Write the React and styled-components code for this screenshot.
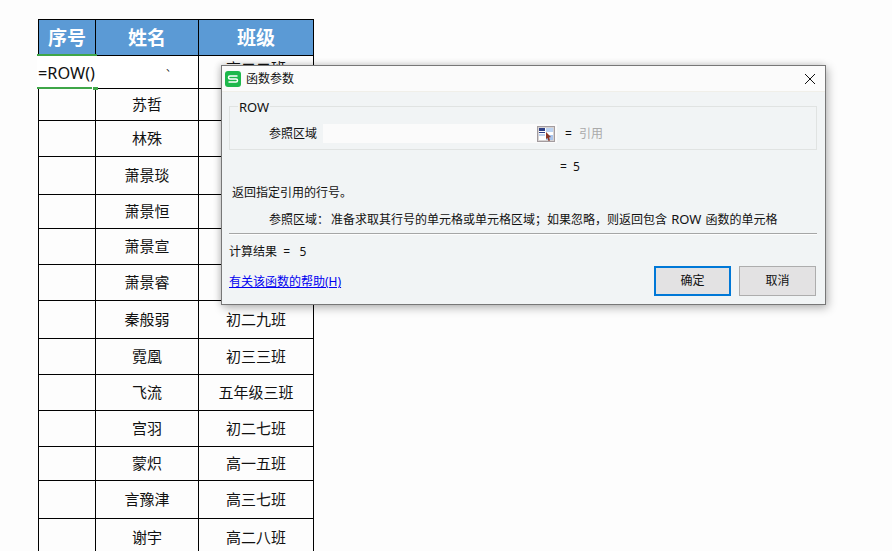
import React from "react";
import styled, { createGlobalStyle } from "styled-components";

const GlobalStyle = createGlobalStyle`
  html, body {
    margin: 0;
    height: 100%;
    overflow: hidden;
    background: #fdfdfd;
  }
  body {
    font-family: "Noto Sans", "Noto Sans CJK SC", sans-serif;
  }
`;

const CJK = `"Noto Sans", "Noto Sans CJK SC", sans-serif`;

const Page = styled.div`
  position: relative;
  width: 892px;
  height: 551px;
  overflow: hidden;
  padding: 19px 0 0 38px;
  box-sizing: border-box;
`;

const Sheet = styled.table`
  border-collapse: collapse;
  table-layout: fixed;
  width: 275px;
  color: #111;
  font-size: 15px;
  line-height: 20px;
`;

const Row = styled.tr`
  height: ${(p) => p.$h}px;
`;

const HeadCell = styled.th`
  padding: 0;
  border: 1px solid #000;
  background: #5b9ad5;
  color: #fff;
  font-size: 19px;
  font-weight: 700;
  text-align: center;
`;

const Cell = styled.td`
  position: relative;
  padding: 0 0 2px;
  border: 1px solid #000;
  text-align: center;
`;

const TopCell = styled(Cell)`
  vertical-align: top;
  padding: 2px 0 0;
`;

const Editor = styled.div`
  position: absolute;
  z-index: 2;
  left: -2px;
  right: -2px;
  top: -2px;
  bottom: -1px;
  display: flex;
  align-items: center;
  box-sizing: border-box;
  padding-left: 1px;
  background: #fff;
  border-top: 2px solid #3fa648;
  font-size: 16.3px;
  color: #111;
  white-space: nowrap;
`;

const EditorBottom = styled.span`
  position: absolute;
  left: 0;
  bottom: 0;
  width: 55px;
  height: 2px;
  background: #3fa648;
`;

const FillHandle = styled.span`
  position: absolute;
  left: 56px;
  bottom: -1px;
  width: 5px;
  height: 3px;
  background: #3fa648;
`;

const BlankName = styled(Cell)`
  border-left-color: transparent;
  background: #fff;
`;

const StrayMark = styled.span`
  position: absolute;
  left: 70px;
  top: 5px;
  font-size: 10px;
  line-height: 12px;
`;

const Dialog = styled.div`
  position: absolute;
  z-index: 5;
  left: 221px;
  top: 65px;
  width: 605px;
  height: 240px;
  box-sizing: border-box;
  border: 1px solid #777;
  background: #f1f4f5;
  box-shadow: 2px 3px 9px rgba(0, 0, 0, 0.28), -2px -1px 6px rgba(0, 0, 0, 0.12);
  display: flex;
  flex-direction: column;
  font-family: ${CJK};
  font-size: 12px;
  line-height: 16px;
  color: #111;
`;

const TitleBar = styled.div`
  height: 26px;
  flex: none;
  display: flex;
  align-items: center;
  gap: 5px;
  padding: 0 10px 0 3px;
  background: #fbfbfb;
  border-bottom: 1px solid #f0efe9;
  box-sizing: border-box;
`;

const TitleText = styled.span`
  flex: 1;
`;

const Body = styled.div`
  flex: 1;
  display: flex;
  flex-direction: column;
  padding: 0 8px 0 7px;
`;

const GroupBox = styled.fieldset`
  margin: 5px 0 0;
  padding: 0;
  height: 53px;
  box-sizing: border-box;
  border: 1px solid #e0e3e2;
  display: flex;
  align-items: center;
`;

const GroupTitle = styled.legend`
  margin-left: 8px;
  padding: 2px 1px 0;
  font-size: 13px;
  line-height: 16px;
`;

const ParamRow = styled.div`
  display: flex;
  align-items: center;
  margin-top: 9px;
  margin-left: 39px;
  width: 100%;
`;

const ParamLabel = styled.span`
  width: 48px;
  flex: none;
`;

const RefInput = styled.div`
  width: 234px;
  height: 19px;
  margin-left: 6px;
  flex: none;
  display: flex;
  justify-content: flex-end;
  align-items: center;
  padding-right: 2px;
  box-sizing: border-box;
  background: #fbfbfb;
`;

const Equals = styled.span`
  margin-left: 8px;
`;

const Hint = styled.span`
  margin-left: 7px;
  color: #aaa;
`;

const TextLine = styled.div`
  margin-top: ${(p) => p.$top}px;
  margin-left: ${(p) => p.$left}px;
  white-space: nowrap;
`;

const DescKey = styled.span`
  display: inline-block;
  width: 62px;
`;

const LatinWord = styled.span`
  margin: 0 1px;
  font-size: 13px;
`;

const Divider = styled.div`
  height: 1px;
  margin-top: 5px;
  background: #a5a6a6;
  box-shadow: 0 1px 0 #fdfdfd;
`;

const Footer = styled.div`
  display: flex;
  align-items: flex-start;
  justify-content: space-between;
  margin-top: 6px;
  padding-right: 1px;
`;

const HelpLink = styled.a`
  margin-top: 8px;
  color: #0000f0;
  text-decoration: underline;
`;

const Buttons = styled.div`
  display: flex;
  gap: 8px;
`;

const Button = styled.button`
  width: 77px;
  height: 30px;
  padding: 0;
  box-sizing: border-box;
  font: inherit;
  color: #111;
  background: #e3e2e3;
  border: ${(p) => (p.$primary ? "2px solid #0078d7" : "1px solid #adadad")};
`;

const Logo = () => (
  <svg width="16" height="16" viewBox="0 0 16 16">
    <rect width="16" height="16" rx="3" fill="#1eb84c" />
    <path
      d="M12.5 5H5a1.4 1.4 0 0 0 0 3h6a1.4 1.4 0 0 1 0 3H3.5"
      fill="none"
      stroke="#fff"
      strokeWidth="1.5"
    />
  </svg>
);

const CloseIcon = () => (
  <svg width="10" height="10" viewBox="0 0 10 10">
    <path d="M0 0L10 10M10 0L0 10" stroke="#111" strokeWidth="1" />
  </svg>
);

const PickIcon = () => (
  <svg width="18" height="16" viewBox="0 0 18 16">
    <rect x="0.5" y="0.5" width="17" height="15" fill="#d7d3d3" stroke="#a39c9f" />
    <rect x="2" y="2" width="14" height="12" fill="#fff" />
    <rect x="2" y="2" width="6" height="3" fill="#2d3f86" />
    <rect x="2" y="6" width="6" height="1" fill="#2d3f86" />
    <rect x="9" y="2" width="7" height="4" fill="#bcd3f2" />
    <rect x="2" y="8" width="6" height="2" fill="#bcd3f2" />
    <rect x="9" y="9" width="7" height="5" fill="#a9c6ee" />
    <path d="M9 6l5 5-2 .5 1 3-1.5.5-1-3L9 13z" fill="#8d3a2a" />
  </svg>
);

const rows = [
  [32, "苏哲", ""],
  [36, "林殊", ""],
  [38, "萧景琰", ""],
  [34, "萧景恒", ""],
  [36, "萧景宣", ""],
  [36, "萧景睿", ""],
  [38, "秦般弱", "初二九班"],
  [36, "霓凰", "初三三班"],
  [36, "飞流", "五年级三班"],
  [36, "宫羽", "初二七班"],
  [34, "蒙炽", "高一五班"],
  [38, "言豫津", "高三七班"],
  [38, "谢宇", "高二八班"],
];

export default function App() {
  return (
    <Page>
      <GlobalStyle />
      <Sheet>
        <colgroup>
          <col width="57" />
          <col width="103" />
          <col width="115" />
        </colgroup>
        <thead>
          <Row $h={36}>
            <HeadCell>序号</HeadCell>
            <HeadCell>姓名</HeadCell>
            <HeadCell>班级</HeadCell>
          </Row>
        </thead>
        <tbody>
          <Row $h={33}>
            <Cell>
              <Editor>
                =ROW()
                <EditorBottom />
                <FillHandle />
              </Editor>
            </Cell>
            <BlankName>
              <StrayMark>、</StrayMark>
            </BlankName>
            <TopCell>高二二班</TopCell>
          </Row>
          {rows.map(([h, name, grade]) => (
            <Row key={name} $h={h}>
              <Cell />
              <Cell>{name}</Cell>
              <Cell>{grade}</Cell>
            </Row>
          ))}
        </tbody>
      </Sheet>

      <Dialog>
        <TitleBar>
          <Logo />
          <TitleText>函数参数</TitleText>
          <CloseIcon />
        </TitleBar>
        <Body>
          <GroupBox>
            <GroupTitle>ROW</GroupTitle>
            <ParamRow>
              <ParamLabel>参照区域</ParamLabel>
              <RefInput>
                <PickIcon />
              </RefInput>
              <Equals>=</Equals>
              <Hint>引用</Hint>
            </ParamRow>
          </GroupBox>
          <TextLine $top={9} $left={331}>
            =&nbsp;&nbsp;5
          </TextLine>
          <TextLine $top={10} $left={3}>
            返回指定引用的行号。
          </TextLine>
          <TextLine $top={10} $left={40}>
            <DescKey>参照区域：</DescKey>
            准备求取其行号的单元格或单元格区域；如果忽略，则返回包含 <LatinWord>ROW</LatinWord> 函数的单元格
          </TextLine>
          <Divider />
          <TextLine $top={10} $left={0}>
            计算结果&nbsp;&nbsp;=&nbsp;&nbsp;&nbsp;5
          </TextLine>
          <Footer>
            <HelpLink href="#">有关该函数的帮助(H)</HelpLink>
            <Buttons>
              <Button $primary>确定</Button>
              <Button>取消</Button>
            </Buttons>
          </Footer>
        </Body>
      </Dialog>
    </Page>
  );
}
